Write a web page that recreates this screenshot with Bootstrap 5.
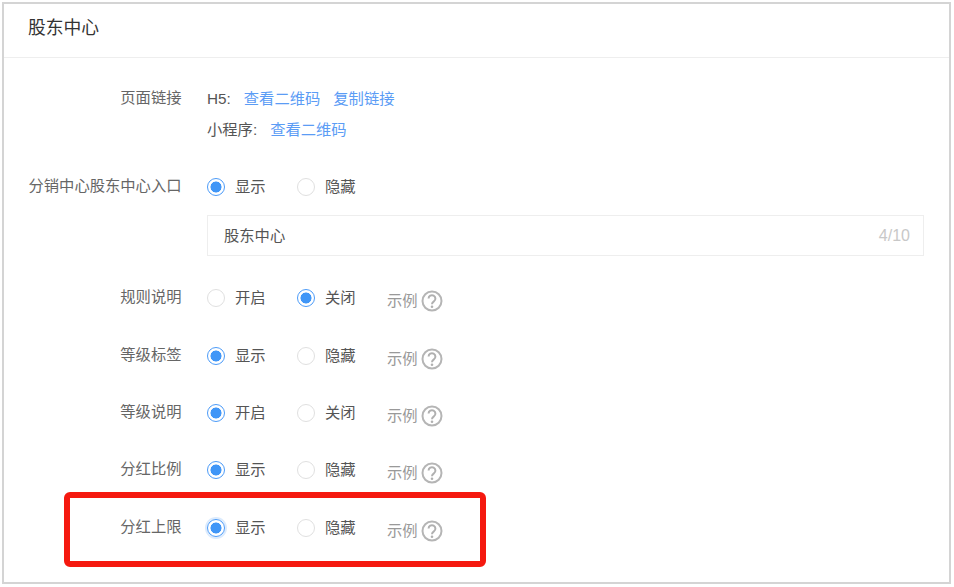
<!DOCTYPE html>
<html lang="zh">
<head>
<meta charset="utf-8">
<title>股东中心</title>
<link href="https://cdn.jsdelivr.net/npm/bootstrap@5.3.0/dist/css/bootstrap.min.css" rel="stylesheet">
<style>
html,body{height:100%;background:#fff;overflow:hidden}
body{font-family:"Liberation Sans","Noto Sans CJK SC",sans-serif;font-size:15.3px;color:#555;padding:2px 3px 3px 2px}
.frame{height:582px;border:2px solid #d4d4d4;background:#fff}
.head-bar{height:54px;border-bottom:1px solid #eee;padding-left:24px;font-size:17.8px;color:#333;line-height:49px}
.form-body{padding-top:30px;padding-right:25px}
.form-line{display:flex}
.lbl{width:177.5px;flex:none;text-align:right;color:#666;margin-right:25.5px;line-height:20px;white-space:nowrap}
.lbl.up{margin-top:-1px}
.ctl{flex:1;min-width:0}
.links a{color:#5b9cf5;text-decoration:none;margin-left:13px}
.links{line-height:20px;color:#555;padding-top:1px}
.first-link{margin-bottom:11px}
.gap-37{margin-top:37px}
.gap-36{margin-top:36px}
.gap-35{margin-top:35px}
.gap-31{margin-top:31px}
.opt{display:inline-flex;align-items:center;gap:10px;width:90px;line-height:20px}
.dot{width:18px;height:18px;border-radius:50%;border:1px solid #e0e0e0;background:#fff;flex:none}
.dot.on{border:1.5px solid #4c9bf8;background:radial-gradient(circle,#4096f7 0 5.2px,#fff 5.8px)}
.dot.glow{box-shadow:0 0 0 2px #dcebfd}
.eg{display:inline-flex;align-items:center;gap:3px;color:#999;position:relative;top:3px;line-height:20px}
.eg svg{display:block}
.field{height:41px;border:1px solid #eee;display:flex;align-items:center;justify-content:space-between;padding:1px 13px 0 16px;color:#555;margin-top:18px}
.field span{color:#c8c8c8;font-size:16px}
.mark-wrap{position:relative}
.red-box{position:absolute;left:60px;top:-25px;width:422px;height:75px;border:6px solid #f5190f;border-radius:6px;pointer-events:none}
</style>
</head>
<body>
<svg width="0" height="0" class="d-block position-absolute"><symbol id="help" viewBox="0 0 22 22"><circle cx="11" cy="11" r="9.5" fill="none" stroke="#b5b5b5" stroke-width="2"/><path d="M7.6 8.6a3.4 3.4 0 1 1 5.3 2.8c-1.2.8-1.9 1.4-1.9 2.8" fill="none" stroke="#b0b0b0" stroke-width="2"/><circle cx="11" cy="16.8" r="1.3" fill="#b0b0b0"/></symbol></svg>
<div class="frame">
  <div class="head-bar">股东中心</div>
  <div class="form-body">
    <div class="form-line">
      <div class="lbl">页面链接</div>
      <div class="ctl links">
        <div class="d-flex first-link"><span>H5:</span><a href="#">查看二维码</a><a href="#">复制链接</a></div>
        <div class="d-flex"><span>小程序:</span><a href="#">查看二维码</a></div>
      </div>
    </div>
    <div class="form-line gap-37">
      <div class="lbl up">分销中心股东中心入口</div>
      <div class="ctl">
        <div class="d-flex align-items-center"><span class="opt"><span class="dot on"></span>显示</span><span class="opt"><span class="dot"></span>隐藏</span></div>
        <div class="field">股东中心<span>4/10</span></div>
      </div>
    </div>
    <div class="form-line gap-31">
      <div class="lbl">规则说明</div>
      <div class="ctl d-flex align-items-center"><span class="opt"><span class="dot"></span>开启</span><span class="opt"><span class="dot on"></span>关闭</span><span class="eg">示例<svg width="22" height="22"><use href="#help"/></svg></span></div>
    </div>
    <div class="form-line gap-36">
      <div class="lbl">等级标签</div>
      <div class="ctl d-flex align-items-center"><span class="opt"><span class="dot on"></span>显示</span><span class="opt"><span class="dot"></span>隐藏</span><span class="eg">示例<svg width="22" height="22"><use href="#help"/></svg></span></div>
    </div>
    <div class="form-line gap-35">
      <div class="lbl">等级说明</div>
      <div class="ctl d-flex align-items-center"><span class="opt"><span class="dot on"></span>开启</span><span class="opt"><span class="dot"></span>关闭</span><span class="eg">示例<svg width="22" height="22"><use href="#help"/></svg></span></div>
    </div>
    <div class="form-line gap-35">
      <div class="lbl">分红比例</div>
      <div class="ctl d-flex align-items-center"><span class="opt"><span class="dot on"></span>显示</span><span class="opt"><span class="dot"></span>隐藏</span><span class="eg">示例<svg width="22" height="22"><use href="#help"/></svg></span></div>
    </div>
    <div class="form-line mark-wrap gap-36">
      <div class="lbl">分红上限</div>
      <div class="ctl d-flex align-items-center"><span class="opt"><span class="dot on glow"></span>显示</span><span class="opt"><span class="dot"></span>隐藏</span><span class="eg">示例<svg width="22" height="22"><use href="#help"/></svg></span></div>
      <div class="red-box"></div>
    </div>
  </div>
</div>
</body>
</html>
